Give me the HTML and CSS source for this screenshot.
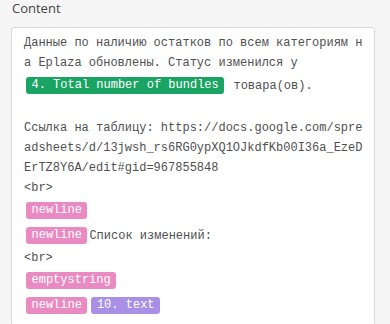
FILE: index.html
```html
<!DOCTYPE html>
<html lang="ru">
<head>
    <meta charset="UTF-8">
    <title>Content</title>
    <link rel="stylesheet" href="styles.css">
</head>
<body>
    <div class="field">
        <div class="field-label">Content</div>
        <div class="editor">
            <div class="line">Данные по наличию остатков по всем категориям на Eplaza обновлены. Статус изменился у <span class="tag tag-green">4. Total number of bundles</span> товара(ов).</div>
            <div class="line empty"></div>
            <div class="line">Ссылка на таблицу: https://docs.google.com/spreadsheets/d/13jwsh_rs6RG0ypXQ1OJkdfKb00I36a_EzeDErTZ8Y6A/edit#gid=967855848</div>
            <div class="line">&lt;br&gt;</div>
            <div class="line"><span class="tag tag-pink">newline</span></div>
            <div class="line"><span class="tag tag-pink">newline</span>Список изменений:</div>
            <div class="line">&lt;br&gt;</div>
            <div class="line"><span class="tag tag-pink">emptystring</span></div>
            <div class="line"><span class="tag tag-pink">newline</span><span class="tag tag-purple">10. text</span></div>
        </div>
    </div>
</body>
</html>
```

FILE: styles.css
```css
body {
    margin: 0;
    background: #f5f5f5;
}
.field {
    padding: 0 15px 0 11px;
}
.field-label {
    height: 27px;
    padding-left: 1px;
    font-family: "Open Sans", "Noto Sans", sans-serif;
    font-size: 13px;
    line-height: 17px;
    color: #444;
}
.editor {
    background: #fff;
    border: 1px solid #d9d9d9;
    border-radius: 3px;
    padding: 5px 10px 7px 12px;
    font-family: "Courier New", "Liberation Mono", monospace;
    font-size: 12px;
    line-height: 20px;
    color: #505050;
    word-break: break-all;
}
.line.empty {
    height: 20px;
}
.tag {
    display: inline-block;
    height: 17px;
    line-height: 17px;
    padding: 0 5.5px;
    margin: 4px 2px;
    border-radius: 3px;
    color: #fff;
    vertical-align: middle;
}
.tag-green {
    background: #1aa463;
}
.tag-pink {
    background: #e98bc2;
}
.tag-purple {
    background: #a98fe6;
}
```
